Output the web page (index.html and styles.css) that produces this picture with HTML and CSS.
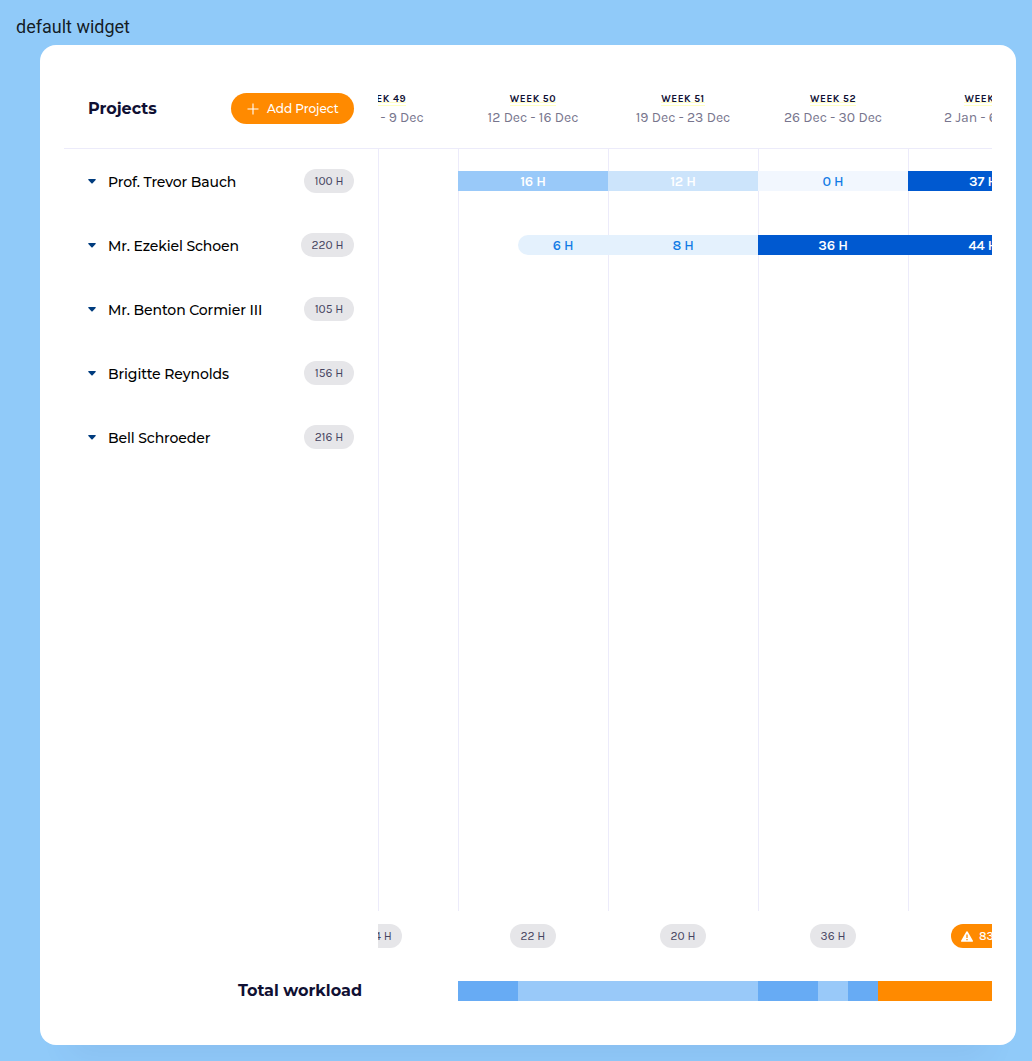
FILE: index.html
```html
<!DOCTYPE html>
<html lang="en">
<head>
<meta charset="utf-8">
<title>Projects</title>
<link rel="stylesheet" href="styles.css">
</head>
<body>
<h1 class="story-title">default widget</h1>
<main class="widget">
  <header class="head">
    <div class="side head-side">
      <h2 class="title">Projects</h2>
      <button class="add"><svg class="plus" viewBox="0 0 12 12"><path d="M6 .5v11M.5 6h11"/></svg><span>Add Project</span></button>
    </div>
    <div class="viewport"><div class="track">
      <div class="week"><b class="week-name"><span>WEEK 49</span></b><span class="dates">5 Dec - 9 Dec</span></div>
      <div class="week"><b class="week-name"><span>WEEK 50</span></b><span class="dates">12 Dec - 16 Dec</span></div>
      <div class="week"><b class="week-name"><span>WEEK 51</span></b><span class="dates">19 Dec - 23 Dec</span></div>
      <div class="week"><b class="week-name"><span>WEEK 52</span></b><span class="dates">26 Dec - 30 Dec</span></div>
      <div class="week"><b class="week-name"><span>WEEK 1</span></b><span class="dates">2 Jan - 6 Jan</span></div>
    </div></div>
  </header>
  <section class="body">
    <ul class="side people">
      <li class="person"><svg class="caret" viewBox="0 0 8 5"><path d="M.8 0h6.400q1 .2.4 1L4.600 4.200q-.6.5-1.200 0L.4 1Q-.2.2.8 0z"/></svg><span class="name">Prof. Trevor Bauch</span><span class="pill">100 H</span></li>
      <li class="person"><svg class="caret" viewBox="0 0 8 5"><path d="M.8 0h6.400q1 .2.4 1L4.600 4.200q-.6.5-1.200 0L.4 1Q-.2.2.8 0z"/></svg><span class="name">Mr. Ezekiel Schoen</span><span class="pill wide">220 H</span></li>
      <li class="person"><svg class="caret" viewBox="0 0 8 5"><path d="M.8 0h6.400q1 .2.4 1L4.600 4.200q-.6.5-1.200 0L.4 1Q-.2.2.8 0z"/></svg><span class="name">Mr. Benton Cormier III</span><span class="pill">105 H</span></li>
      <li class="person"><svg class="caret" viewBox="0 0 8 5"><path d="M.8 0h6.400q1 .2.4 1L4.600 4.200q-.6.5-1.200 0L.4 1Q-.2.2.8 0z"/></svg><span class="name">Brigitte Reynolds</span><span class="pill">156 H</span></li>
      <li class="person"><svg class="caret" viewBox="0 0 8 5"><path d="M.8 0h6.400q1 .2.4 1L4.600 4.200q-.6.5-1.200 0L.4 1Q-.2.2.8 0z"/></svg><span class="name">Bell Schroeder</span><span class="pill">216 H</span></li>
    </ul>
    <div class="viewport chart"><div class="rows">
      <div class="bars"><i class="empty"></i><span class="bar l3">16 H</span><span class="bar l2">12 H</span><span class="bar l0">0 H</span><span class="bar l5">37 H</span></div>
      <div class="bars"><i class="empty"></i><i class="late"></i><span class="bar l1 start">6 H</span><span class="bar l1">8 H</span><span class="bar l5">36 H</span><span class="bar l5">44 H</span></div>
    </div></div>
  </section>
  <footer class="foot">
    <div class="side foot-side"><h2 class="title">Total workload</h2></div>
    <div class="viewport">
      <div class="track sums">
        <div class="sum"><span class="pill narrow">4 H</span></div>
        <div class="sum"><span class="pill">22 H</span></div>
        <div class="sum"><span class="pill">20 H</span></div>
        <div class="sum"><span class="pill">36 H</span></div>
        <div class="sum"><span class="pill warn"><svg class="alert" viewBox="0 0 12 11"><path class="tri" d="M6 .3q.5 0 .8.5l5 8.800q.5 1.100-.6 1.100H.8q-1.100 0-.6-1.100l5-8.800Q5.500.3 6 .3z"/><path class="mark" d="M6 3.600v3.300M6 8v1.200"/></svg><span>83 H</span></span></div>
      </div>
      <div class="load"><i class="mid d2"></i><i class="light d8"></i><i class="mid d2"></i><i class="light d1"></i><i class="mid d1"></i><i class="over"></i></div>
    </div>
  </footer>
</main>
</body>
</html>
```
FILE: styles.css
```css
* { box-sizing: border-box; }
body { margin: 0; height: 1061px; padding: 16px; overflow: hidden; background: #90caf9; font-family: Montserrat, Inter, "Liberation Sans", sans-serif; }
.story-title { margin: 0; height: 29px; font: 400 18px/22px Roboto, sans-serif; color: rgba(0,0,0,.87); }
.widget { display: flex; flex-direction: column; width: 976px; height: 1000px; margin-left: 24px; padding: 24px; border-radius: 16px; background: #fff; box-shadow: 0 40px 30px -30px rgba(60,60,130,.08); }
.head { display: flex; flex: none; height: 80px; border-bottom: 1px solid #ecebfa; }
.side { flex: none; width: 314px; margin: 0; }
.viewport { flex: 1; min-width: 0; overflow: hidden; font-family: Karla, Inter, "Liberation Sans", sans-serif; }
.head-side { display: flex; align-items: flex-start; justify-content: space-between; padding: 24px 24px 0; }
.title { margin: 0; font-size: 16px; line-height: 31px; font-weight: 700; color: #101033; }
.add { display: flex; align-items: center; gap: 8px; width: 123px; height: 31px; padding: 0 0 0 16px; border: 0; border-radius: 16px; background: #ff8a00; color: #fff; font: 500 12px/31px Montserrat, Inter, sans-serif; white-space: nowrap; }
.plus { width: 12px; height: 12px; fill: none; stroke: #fff; stroke-width: 1.1; }
.track { display: flex; width: 750px; margin-left: -70px; }
.week { width: 150px; padding-top: 24px; text-align: center; }
.week-name { display: block; height: 14px; font-size: 10px; line-height: 12px; font-weight: 700; letter-spacing: .55px; color: #101033; }
.week-name span { display: inline-block; height: 13px; vertical-align: top; background: linear-gradient(#ffffc2, #ffffc2) 0 9px / 100% 1px no-repeat, linear-gradient(#ffffc2, #ffffc2) 0 12px / 100% 1px no-repeat; }
.dates { display: block; font-size: 14px; line-height: 22px; color: #77758d; }
.body { display: flex; flex: none; height: 762px; }
.people { padding: 0 24px; list-style: none; }
.person { display: flex; align-items: center; height: 64px; }
.caret { width: 8px; height: 5px; margin-right: 12px; fill: #003c7e; }
.name { flex: 1; padding-top: 2px; font-size: 14px; font-weight: 500; letter-spacing: -.1px; color: #000; white-space: nowrap; }
.pill { display: inline-flex; align-items: center; justify-content: center; width: 50px; height: 24px; padding-top: 1px; border-radius: 12px; background: #e6e6e9; color: #45435f; font: 400 12px/23px Karla, Inter, sans-serif; white-space: nowrap; }
.pill.wide { width: 53px; }
.chart { background: repeating-linear-gradient(90deg, #ecebfa 0 1px, transparent 1px 150px) 80px 0 no-repeat, linear-gradient(#ecebfa, #ecebfa) 0 0 / 1px 100% no-repeat; }
.rows { width: 750px; margin-left: -70px; }
.bars { display: flex; align-items: center; height: 64px; }
.empty { width: 150px; }
.late { width: 60px; }
.bar { width: 150px; height: 20px; font-size: 14px; line-height: 21px; font-weight: 600; letter-spacing: -.2px; text-align: center; color: #fff; }
.l0 { background: #f2f7fe; color: #0f7ae5; font-weight: 500; }
.l1 { background: #e4f1fd; color: #0f7ae5; font-weight: 500; }
.l2 { background: #cce4fb; }
.l3 { background: #99c9f9; }
.l5 { background: #0059d0; }
.start { width: 90px; border-radius: 10px 0 0 10px; }
.foot { display: flex; flex: none; height: 110px; }
.foot-side { padding: 64px 16px 0 0; text-align: right; }
.sums { padding-top: 13px; height: 70px; }
.sum { width: 150px; text-align: center; }
.sum .pill { width: 46px; }
.sum .narrow { width: 38px; }
.sum .warn { width: 64px; gap: 6px; background: #ff8a00; color: #fff; font-weight: 500; }
.alert { width: 12px; height: 11px; }
.tri { fill: #fff; }
.mark { stroke: #ff8a00; stroke-width: 1.3; }
.load { display: flex; height: 20px; padding-left: 80px; }
.mid { background: #67abf4; }
.light { background: #99c9f9; }
.d1 { width: 30px; }
.d2 { width: 60px; }
.d8 { width: 240px; }
.over { flex: 1; background: #ff8a00; }
```
